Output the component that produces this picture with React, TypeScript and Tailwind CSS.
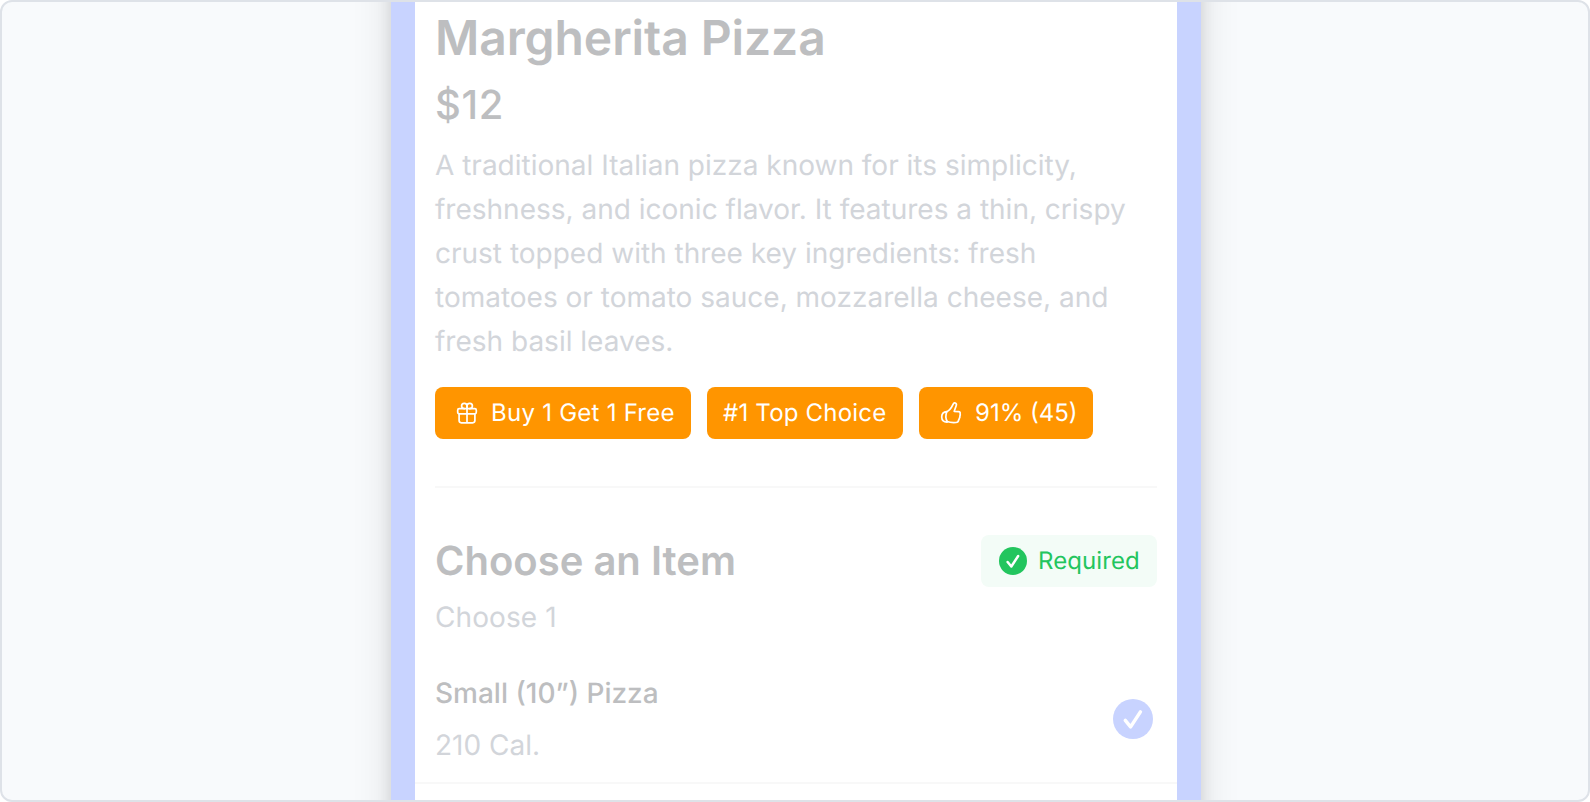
import type { ReactNode } from "react";

const DESCRIPTION =
  "A traditional Italian pizza known for its simplicity, freshness, and iconic flavor. It features a thin, crispy crust topped with three key ingredients: fresh tomatoes or tomato sauce, mozzarella cheese, and fresh basil leaves.";

function GiftIcon() {
  return (
    <svg className="size-6 shrink-0" viewBox="0 0 24 24" fill="none" stroke="currentColor" strokeWidth="1.7" strokeLinecap="round" strokeLinejoin="round">
      <rect x="2.7" y="7.7" width="18.6" height="5.1" rx="1.5" />
      <path d="M4.1 12.8v6.8a2.2 2.2 0 0 0 2.2 2.2h11.4a2.2 2.2 0 0 0 2.2-2.2v-6.8M12 5v16.8" />
      <path d="M12 7.700V4.800a2.700 2.700 0 1 0-2.700 2.900M12 7.700V4.800a2.700 2.700 0 1 1 2.700 2.900" />
    </svg>
  );
}

function ThumbIcon() {
  return (
    <svg className="size-6 shrink-0" viewBox="0 0 24 24" fill="none" stroke="currentColor" strokeWidth="1.7" strokeLinecap="round" strokeLinejoin="round">
      <path d="M7.8 10.7c2.800-1.200 4.700-4 6.100-7 .8-1.600 1.600-2.200 2.500-1.700 1 .5 1.200 1.600.8 2.700l-2 5.600 4.400.4c1.300.1 1.900.9 1.500 2.100.3.800.2 1.500-.2 2.200.1.900-.1 1.600-.5 2.200-.1.800-.4 1.400-.8 1.900-.2 1.600-1 2.300-2.500 2.400-3.400.3-6.400 0-9-1" />
      <path d="M7.800 10.700c-1.200 2.900-1 7.500.6 10.300-3.600.3-5.700-1.600-5.700-4.900 0-2.900 1.900-5.200 5.100-5.400Z" />
    </svg>
  );
}

function Check({ className }: { className: string }) {
  return (
    <svg className={className} viewBox="0 0 40 40" fill="none">
      <circle cx="20" cy="20" r="20" fill="currentColor" />
      <path d="m12.3 21.4 5.3 6.5 9.800-15" stroke="white" strokeWidth="3.5" strokeLinecap="round" strokeLinejoin="round" />
    </svg>
  );
}

function Badge({ icon, className, children }: { icon?: ReactNode; className: string; children: ReactNode }) {
  return (
    <div className={`flex h-13 items-center gap-3 rounded-lg bg-[#ff9500] text-2xl whitespace-nowrap text-white ${className}`}>
      {icon}
      <span>{children}</span>
    </div>
  );
}

export default function App() {
  return (
    <main className="flex h-[802px] w-[1590px] items-start justify-center overflow-hidden rounded-xl border-2 border-[#dee2e8] bg-[#f8fafc] font-['Inter',sans-serif] [text-rendering:geometricPrecision]">
      <section className="-mt-12 ml-0.5 h-[900px] w-[810px] shrink-0 border-x-24 border-[#c8d3ff] bg-white pt-12 text-[#bdbec0] shadow-[0_0_38px_rgba(0,0,0,0.12),0_0_14px_rgba(0,0,0,0.10)]">
        <div className="px-[20px] pt-1.5">
          <h1 className="text-[48px] leading-[60px] font-semibold tracking-[-0.08px]">Margherita Pizza</h1>
          <p className="mt-[11px] text-[40px] leading-[52px] font-medium tracking-[0.6px]">$12</p>
          <p className="mt-3 text-[28px] leading-[44px] text-[#d2d5da]">{DESCRIPTION}</p>
          <div className="mt-6 flex gap-4">
            <Badge icon={<GiftIcon />} className="w-64 pl-5 tracking-[0.25px]">Buy 1 Get 1 Free</Badge>
            <Badge className="w-[196px] pl-4 tracking-[0.2px]">#1 Top Choice</Badge>
            <Badge icon={<ThumbIcon />} className="w-[174px] pl-5">91% (45)</Badge>
          </div>
          <hr className="mt-[47px] border-t-2 border-[#f8f8f8]" />
          <div className="mt-[47px] flex items-center justify-between">
            <h2 className="text-[40px] leading-[52px] font-semibold">Choose an Item</h2>
            <div className="flex h-13 w-44 items-center gap-[11px] rounded-lg bg-[#f3fcf7] pl-[18px] text-2xl tracking-[0.1px] text-[#22c55e]">
              <Check className="size-7" />
              <span>Required</span>
            </div>
          </div>
          <p className="mt-2 text-[28px] leading-[44px] tracking-[0.1px] text-[#d2d5da]">Choose 1</p>
        </div>
        <div className="mt-8 flex items-center justify-between border-b-2 border-[#f8f8f8] pr-6 pb-[15px] pl-[20px]">
          <div className="text-[28px] leading-[44px]">
            <p className="font-medium">Small (10”) Pizza</p>
            <p className="mt-2 text-[#d2d5da]">210 Cal.</p>
          </div>
          <Check className="size-10 text-[#c8d3ff]" />
        </div>
      </section>
    </main>
  );
}
